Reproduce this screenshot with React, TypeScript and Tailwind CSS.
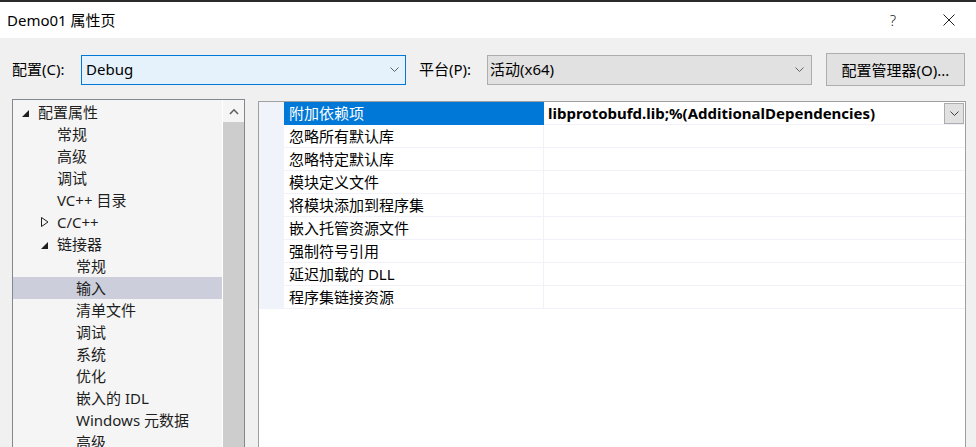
import React from "react"

type TreeItem = {
  label: string
  level: number
  arrow?: "open" | "closed"
  selected?: boolean
}

const treeItems: TreeItem[] = [
  { label: "配置属性", level: 0, arrow: "open" },
  { label: "常规", level: 1 },
  { label: "高级", level: 1 },
  { label: "调试", level: 1 },
  { label: "VC++ 目录", level: 1 },
  { label: "C/C++", level: 1, arrow: "closed" },
  { label: "链接器", level: 1, arrow: "open" },
  { label: "常规", level: 2 },
  { label: "输入", level: 2, selected: true },
  { label: "清单文件", level: 2 },
  { label: "调试", level: 2 },
  { label: "系统", level: 2 },
  { label: "优化", level: 2 },
  { label: "嵌入的 IDL", level: 2 },
  { label: "Windows 元数据", level: 2 },
  { label: "高级", level: 2 },
]

const indent = ["pl-[9px]", "pl-[28px]", "pl-[47px]"]

const props = [
  "附加依赖项",
  "忽略所有默认库",
  "忽略特定默认库",
  "模块定义文件",
  "将模块添加到程序集",
  "嵌入托管资源文件",
  "强制符号引用",
  "延迟加载的 DLL",
  "程序集链接资源",
]

const Chevron = ({ color = "#606060" }: { color?: string }) => (
  <svg width="9" height="5" viewBox="0 0 9 5">
    <path d="M0.5 0.5 L4.5 4.5 L8.5 0.5" fill="none" stroke={color} strokeWidth="1" />
  </svg>
)

const Arrow = ({ kind }: { kind?: "open" | "closed" }) => {
  if (kind === "open")
    return (
      <svg width="7" height="7" viewBox="0 0 7 7" className="mt-[2px]">
        <path d="M7 0 L7 7 L0 7 Z" fill="#1e1e1e" />
      </svg>
    )
  if (kind === "closed")
    return (
      <svg width="8" height="10" viewBox="0 0 8 10">
        <path d="M0.5 0.5 L7 5 L0.5 9.5 Z" fill="none" stroke="#1e1e1e" strokeWidth="1" />
      </svg>
    )
  return null
}

const TitleBar = () => (
  <div className="h-[38px] shrink-0 bg-white border-t-2 border-[#2b2b2b] flex items-center pl-[7px] pr-[21px]">
    <span className="flex-1 leading-[20px] text-black">Demo01 属性页</span>
    <span className="w-[16px] text-center font-light text-[15px] leading-[20px] text-[#1e1e1e] mr-[42px]">?</span>
    <svg width="12" height="12" viewBox="0 0 12 12">
      <path d="M0.5 0.5 L11.5 11.5 M11.5 0.5 L0.5 11.5" stroke="#1e1e1e" strokeWidth="1" />
    </svg>
  </div>
)

const Toolbar = () => (
  <div className="h-[61px] shrink-0 flex items-center pl-[12px] pt-[2px]">
    <span className="w-[69px] leading-[20px] -mt-[1px]">配置(C):</span>
    <div className="w-[325px] h-[30px] flex items-center justify-between border border-[#0078d7] bg-[#e5f1fb] pl-[4px] pr-[6px]">
      <span className="leading-[20px] -mt-[1px]">Debug</span>
      <Chevron />
    </div>
    <span className="ml-[13px] w-[68px] leading-[20px] -mt-[1px]">平台(P):</span>
    <div className="w-[325px] h-[30px] flex items-center justify-between border border-[#adadad] bg-[#e1e1e1] pl-[2px] pr-[7px]">
      <span className="leading-[20px] -mt-[1px]">活动(x64)</span>
      <Chevron />
    </div>
    <button className="ml-[14px] w-[139px] h-[33px] border border-[#adadad] bg-[#e1e1e1] flex items-center justify-center leading-[20px]">
      配置管理器(O)...
    </button>
  </div>
)

const Tree = () => (
  <div className="ml-[12px] w-[233px] h-[380px] shrink-0 border border-[#828790] bg-[#f5f5f5] flex">
    <div className="w-[209px] pt-[1px] overflow-hidden">
      {treeItems.map((item, i) => (
        <div
          key={i}
          className={`h-[22px] flex items-center ${indent[item.level]} ${item.selected ? "bg-[#cccedb]" : ""}`}
        >
          <div className="w-[16px] flex items-center">
            <Arrow kind={item.arrow} />
          </div>
          <span className="leading-[22px] text-[#1e1e1e] whitespace-nowrap">{item.label}</span>
        </div>
      ))}
    </div>
    <div className="w-[22px] border-l border-white flex flex-col">
      <div className="h-[22px] flex items-center justify-center">
        <svg width="10" height="7" viewBox="0 0 10 7">
          <path d="M1 6 L5 1.8 L9 6" fill="none" stroke="#606060" strokeWidth="1.6" />
        </svg>
      </div>
      <div className="flex-1 bg-[#cdcdcd]" />
    </div>
  </div>
)

const Grid = () => (
  <div className="ml-[13px] mt-[2px] w-[708px] h-[380px] shrink-0 border border-[#a0a0a0] bg-white">
    {props.map((name, i) => {
      const sel = i === 0
      return (
        <div key={i} className="h-[23px] flex">
          <div className="w-[25px] bg-[#f0f3fa]" />
          <div
            className={`w-[260px] flex items-center pl-[5px] border-b border-r ${
              sel ? "bg-[#0078d7] text-white border-[#0078d7]" : "text-black border-[#f0f2f8]"
            }`}
          >
            <span className="leading-[20px] whitespace-nowrap">{name}</span>
          </div>
          <div className="flex-1 flex items-center justify-between pl-[4px] pr-[1px] border-b border-[#f0f2f8]">
            {sel && (
              <>
                <span className="font-bold text-[15px] leading-[20px] text-black whitespace-nowrap">
                  libprotobufd.lib;%(AdditionalDependencies)
                </span>
                <div className="w-[20px] h-[21px] border border-[#adadad] bg-[#e1e1e1] flex items-center justify-center">
                  <Chevron color="#404040" />
                </div>
              </>
            )}
          </div>
        </div>
      )
    })}
  </div>
)

export default function App() {
  return (
    <div className="w-[976px] h-[447px] overflow-hidden bg-[#f0f0f0] font-['Noto_Sans','Noto_Sans_CJK_SC',sans-serif] text-[15px] text-black flex flex-col">
      <TitleBar />
      <Toolbar />
      <div className="flex flex-1 min-h-0">
        <Tree />
        <Grid />
      </div>
    </div>
  )
}
